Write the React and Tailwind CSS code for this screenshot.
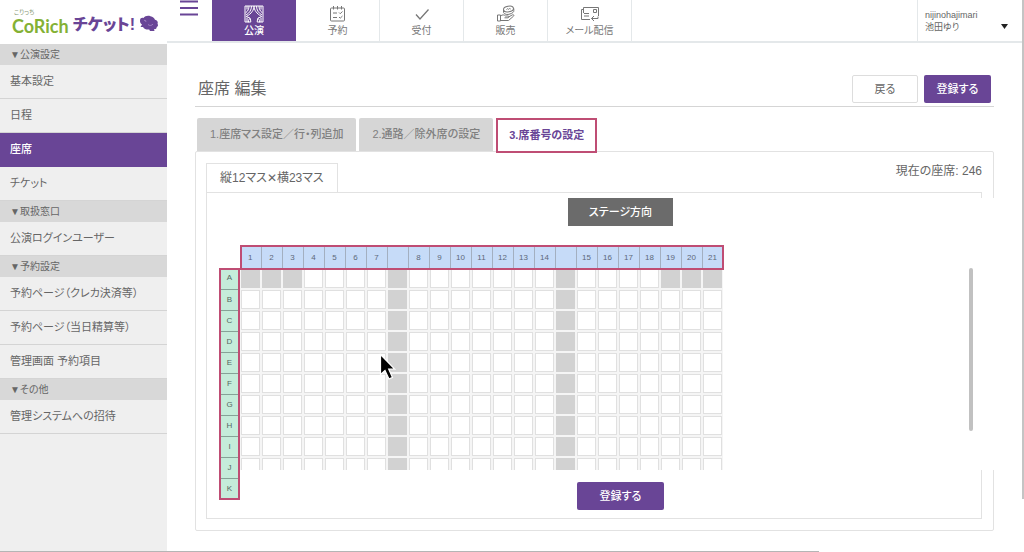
import { useState } from 'react';

const MENU = [
  { title: '公演設定', items: ['基本設定', '日程', '座席', 'チケット'] },
  { title: '取扱窓口', items: ['公演ログインユーザー'] },
  { title: '予約設定', items: ['予約ページ（クレカ決済等）', '予約ページ（当日精算等）', '管理画面 予約項目'] },
  { title: 'その他', items: ['管理システムへの招待'] },
];

const NAV = [
  { label: '公演', icon: CurtainIcon },
  { label: '予約', icon: CalendarIcon },
  { label: '受付', icon: CheckIcon },
  { label: '販売', icon: SalesIcon },
  { label: 'メール配信', icon: MailIcon },
];

const TABS = ['1.座席マス設定／行・列追加', '2.通路／除外席の設定', '3.席番号の設定'];

// 通路の列は番号なし
const COLUMNS = [1, 2, 3, 4, 5, 6, 7, '', 8, 9, 10, 11, 12, 13, 14, '', 15, 16, 17, 18, 19, 20, 21];
const ROWS = ['A', 'B', 'C', 'D', 'E', 'F', 'G', 'H', 'I', 'J', 'K'];

const isClosed = (row, col) =>
  COLUMNS[col] === '' || (row === 0 && (col < 3 || col > 19));

function CurtainIcon() {
  return (
    <svg width="20" height="18" viewBox="0 0 20 18" fill="none" stroke="currentColor" strokeWidth="1">
      <path d="M1 1h18v16h-3.500v-1.500l-1-2M1 1v16h3.500v-1.500l1-2" />
      <path d="M10 1c0 4-2.500 7.500-7.500 10.500M10 1c0 4 2.500 7.500 7.500 10.500M7.500 1c0 4-2 7-5.500 9M12.500 1c0 4 2 7 5.500 9M5 1c0 3-1 5-3.500 7M15 1c0 3 1 5 3.500 7M3 1v3.500M17 1v3.500" />
      <path d="M2 11.500l4 1.500M18 11.500l-4 1.500M3 13v4M17 13v4M6 13c.5 1.500.8 2.500.8 4H4M14 13c-.5 1.500-.8 2.500-.8 4H16" />
    </svg>
  );
}

function CalendarIcon() {
  return (
    <svg width="18" height="18" viewBox="0 0 18 18" fill="none" stroke="currentColor" strokeWidth="1">
      <rect x="1.500" y="3" width="14" height="13" rx="1" />
      <path d="M4.500 1v3.500M8.500 1v3.500M12.500 1v3.500M4 8h4M4 12.500h4M10 7.500l1.200 1.200L13.500 6.500M10 12l1.200 1.200 2.300-2.200" />
    </svg>
  );
}

function CheckIcon() {
  return (
    <svg width="18" height="18" viewBox="0 0 18 18" fill="none" stroke="currentColor" strokeWidth="1.300">
      <path d="M3 9.500l4 4.500 8.500-9.500" />
    </svg>
  );
}

function SalesIcon() {
  return (
    <svg width="20" height="18" viewBox="0 0 20 18" fill="none" stroke="currentColor" strokeWidth="1">
      <ellipse cx="12.500" cy="4" rx="5" ry="2.800" transform="rotate(-10 12.500 4)" />
      <path d="M7.500 5v2.500c1 2 4 2.500 6.500 1.500 2.500-.8 4-2 3.800-3.500V3.500M10.500 4.500l1-.8 1 .6 1.200-.8 1 .5" />
      <path d="M1.500 10h3v6h-3zM4.500 11c2-1.500 3.500-1.500 5 0h2.500c1.200 0 1.200 1.800 0 1.800H8.500M12.500 12l4-2.200c1.200-.5 1.800.7 1 1.400L12.500 15.500h-8" />
    </svg>
  );
}

function MailIcon() {
  return (
    <svg width="20" height="18" viewBox="0 0 20 18" fill="none" stroke="currentColor" strokeWidth="1">
      <path d="M10 14.500H1.500V4.500h2M3.500 8V2.500h15V11" />
      <path d="M4 8.500h5M4 11h5M13.500 4.500h3v3h-3zM11.500 13.500H18v-2M14 11l-2.500 2.500L14 16" />
    </svg>
  );
}

function Logo() {
  return (
    <a href="#" className="flex h-[44px] items-end gap-1 bg-white pb-2 pl-3">
      <span className="flex flex-col">
        <span className="pl-0.5 text-[6px] leading-[8px] text-[#8a9a78]">こりっち</span>
        <span className="font-['Lato'] text-[18px] leading-[20px] font-bold text-[#84b135]">CoRich</span>
      </span>
      <span className="text-[16px] leading-[22px] font-black text-[#694596]">チケット!</span>
      <svg className="mb-1" width="20" height="17" viewBox="0 0 20 17">
        <path
          d="M1 5.500C1 3 3 2.500 4.500 3 6 .8 9 .2 11.500 1.200c2.200.3 3.800 1.600 4.500 3.600 2 .4 3.500 2.500 2.500 4 1 1 .5 3-.8 3.200.2 1.500-1 2.500-2.700 2l.5 2H11l-.8-1.500c-2.700.3-5-.5-6.200-2.500L1.500 12 3 9.500C1.500 8.500.8 7 1 5.500z"
          fill="#694596"
        />
        <path d="M5 5.500c1.500-.8 2.500.5 1.500 1.500M9 9.500c1.500 1.500 4 1.200 5-.5" fill="none" stroke="#a98bc7" strokeWidth=".8" />
      </svg>
    </a>
  );
}

function Sidebar() {
  const [current, setCurrent] = useState('座席');

  return (
    <aside className="w-[167px] shrink-0 bg-[#efefef] text-[#666]">
      <Logo />
      {MENU.map((group) => (
        <section key={group.title}>
          <h2 className="flex h-[21px] items-center bg-[#d8d8d8] pl-[10px] text-[10px]">▼{group.title}</h2>
          <ul>
            {group.items.map((item) => (
              <li key={item}>
                <a
                  href="#"
                  onClick={() => setCurrent(item)}
                  className={
                    item === current
                      ? 'flex h-[34px] items-center border-b border-[#694596] bg-[#694596] pl-[10px] text-[11px] font-medium text-white'
                      : 'flex h-[34px] items-center border-b border-[#d4d4d4] pl-[10px] text-[11px]'
                  }
                >
                  {item}
                </a>
              </li>
            ))}
          </ul>
        </section>
      ))}
    </aside>
  );
}

function Header() {
  return (
    <header className="flex h-[43px] border-b-2 border-[#e4e8ea] text-[#777]">
      <button type="button" aria-label="メニュー" className="flex w-[45px] items-start pl-[13px] text-[#694596]">
        <svg width="18" height="16" viewBox="0 0 18 16" stroke="currentColor" strokeWidth="2.200">
          <path d="M0 1.500h18M0 8h18M0 14.500h18" />
        </svg>
      </button>
      <nav className="flex">
        {NAV.map(({ label, icon: Icon }, i) => (
          <a
            key={label}
            href="#"
            className={
              i === 0
                ? 'flex w-[84px] flex-col items-center gap-px bg-[#694596] pt-[5px] text-[10px] leading-[14px] font-medium text-white'
                : 'flex w-[84px] flex-col items-center gap-px border-r border-[#e4e8ea] pt-[5px] text-[10px] leading-[14px]'
            }
          >
            <Icon />
            {label}
          </a>
        ))}
      </nav>
      <button
        type="button"
        className="ml-auto flex w-[107px] items-center justify-between border-l border-[#e4e8ea] pr-4 pl-[7px] text-left text-[9px] leading-[12px] text-[#666]"
      >
        <span>
          nijinohajimari
          <br />
          池田ゆり
        </span>
        <svg className="mt-3" width="7" height="5" viewBox="0 0 7 5">
          <path d="M0 0h7L3.500 5z" fill="#222" />
        </svg>
      </button>
    </header>
  );
}

function SeatMap() {
  return (
    <div className="relative -mr-[14px] bg-white">
      <div className="flex justify-center pl-[39px]">
        <p className="w-[105px] bg-[#6b6b6b] text-center text-[11px] leading-[28px] font-medium text-white">ステージ方向</p>
      </div>
      <table className="relative z-10 mt-[19px] ml-[33px] table-fixed border-collapse bg-[#c6dbf8] outline-2 -outline-offset-2 outline-[#bf4d74]">
        <thead>
          <tr>
            {COLUMNS.map((col, i) => (
              <th
                key={i}
                className="h-[25px] w-[21px] min-w-[21px] border-r border-[#a3afc0] p-0 text-center font-['Liberation_Sans'] text-[8px] font-normal text-[#5d6878]"
              >
                {col}
              </th>
            ))}
          </tr>
        </thead>
      </table>
      <div className="-mt-0.5 flex h-[202px] pl-3">
        <div className="z-10">
          <table className="border-collapse bg-[#c5ecda] outline-2 -outline-offset-2 outline-[#bf4d74]">
            <tbody>
              {ROWS.map((row) => (
                <tr key={row}>
                  <th
                    scope="row"
                    className="h-[21px] w-[21px] min-w-[21px] border-b border-[#86a297] p-0 text-center font-['Liberation_Sans'] text-[8px] leading-[10px] font-normal text-[#55685f]"
                  >
                    {row}
                  </th>
                </tr>
              ))}
            </tbody>
          </table>
        </div>
        <div className="overflow-hidden">
          <table className="border-separate border-spacing-0">
            <tbody>
              {Array.from({ length: 12 }, (_, r) => (
                <tr key={r}>
                  {COLUMNS.map((_, c) => (
                    <td key={c} className="h-[21px] w-[21px] bg-[#f5f5f5] p-px">
                      <div
                        className={
                          isClosed(r, c)
                            ? 'size-[19px] bg-[#d2d2d2]'
                            : 'size-[19px] border border-[#e0e0e0] bg-white'
                        }
                      />
                    </td>
                  ))}
                </tr>
              ))}
            </tbody>
          </table>
        </div>
        <div className="mr-[22px] ml-auto h-[163px] w-1 rounded-full bg-[#c1c1c1]" />
      </div>
    </div>
  );
}

export default function App() {
  const [tab, setTab] = useState(2);

  return (
    <div className="relative flex min-h-screen overflow-hidden bg-white font-['Liberation_Sans','Noto_Sans_CJK_JP',sans-serif] [font-feature-settings:'palt']">
      <Sidebar />
      <div className="min-w-0 flex-1">
        <Header />
        <main className="pt-8 pr-[30px] pb-5 pl-7 text-[#666]">
          <div className="flex items-center border-b border-[#d5d5d5] pb-[3px] pl-[3px]">
            <h1 className="text-[16px] leading-[28px]">座席 編集</h1>
            <button type="button" className="ml-auto h-7 w-[66px] rounded-xs border border-[#ddd] text-[11px]">
              戻る
            </button>
            <button type="button" className="mr-[3px] ml-1.5 h-7 w-[67px] rounded-xs bg-[#694596] text-[11px] font-medium text-white">
              登録する
            </button>
          </div>

          {/* タブ */}
          <div role="tablist" className="relative z-10 -mb-0.5 flex gap-[3px] pt-[11px] pl-0.5">
            {TABS.map((label, i) => (
              <button
                key={label}
                type="button"
                role="tab"
                aria-selected={i === tab}
                onClick={() => setTab(i)}
                className={
                  i === tab
                    ? 'h-[35px] border-2 border-[#bf4d74] bg-white px-[11px] text-[11px] font-bold text-[#694596]'
                    : 'h-[33px] rounded-t-xs bg-[#d6d6d6] px-[13px] text-[11px] font-medium text-[#808080]'
                }
              >
                {label}
              </button>
            ))}
          </div>

          <div className="rounded-xs border border-[#e2e2e2] py-[11px] pr-[11px] pl-[10px]">
            <div className="flex items-start justify-between">
              <p className="h-[29px] border border-b-0 border-[#e2e2e2] px-[13px] text-[12px] leading-[28px]">縦12マス✕横23マス</p>
              <p className="text-[12px] leading-[16px]">現在の座席: 246</p>
            </div>
            <div className="border border-[#e2e2e2] pt-[5px] pb-2">
              <SeatMap />
              <div className="flex justify-center pt-3 pl-[53px]">
                <button type="button" className="h-7 w-[87px] rounded-xs bg-[#694596] text-[11px] font-medium text-white">
                  登録する
                </button>
              </div>
            </div>
          </div>
        </main>
      </div>

      {/* スクロールバー */}
      <div className="absolute top-0 right-0 h-[499px] w-0.5 bg-[#c4c4c4]" />
      <div className="absolute bottom-0 left-0 h-px w-4/5 bg-[#b5b5b5]" />

      <svg className="absolute top-[353px] left-[379px] z-20" width="19" height="28" viewBox="0 0 19 28">
        <path d="M1.500 1.500v20l4.500-4 4 8.500 3.500-1.600-3.800-8.200h6z" fill="#000" stroke="#fff" strokeWidth="1.200" />
      </svg>
    </div>
  );
}
